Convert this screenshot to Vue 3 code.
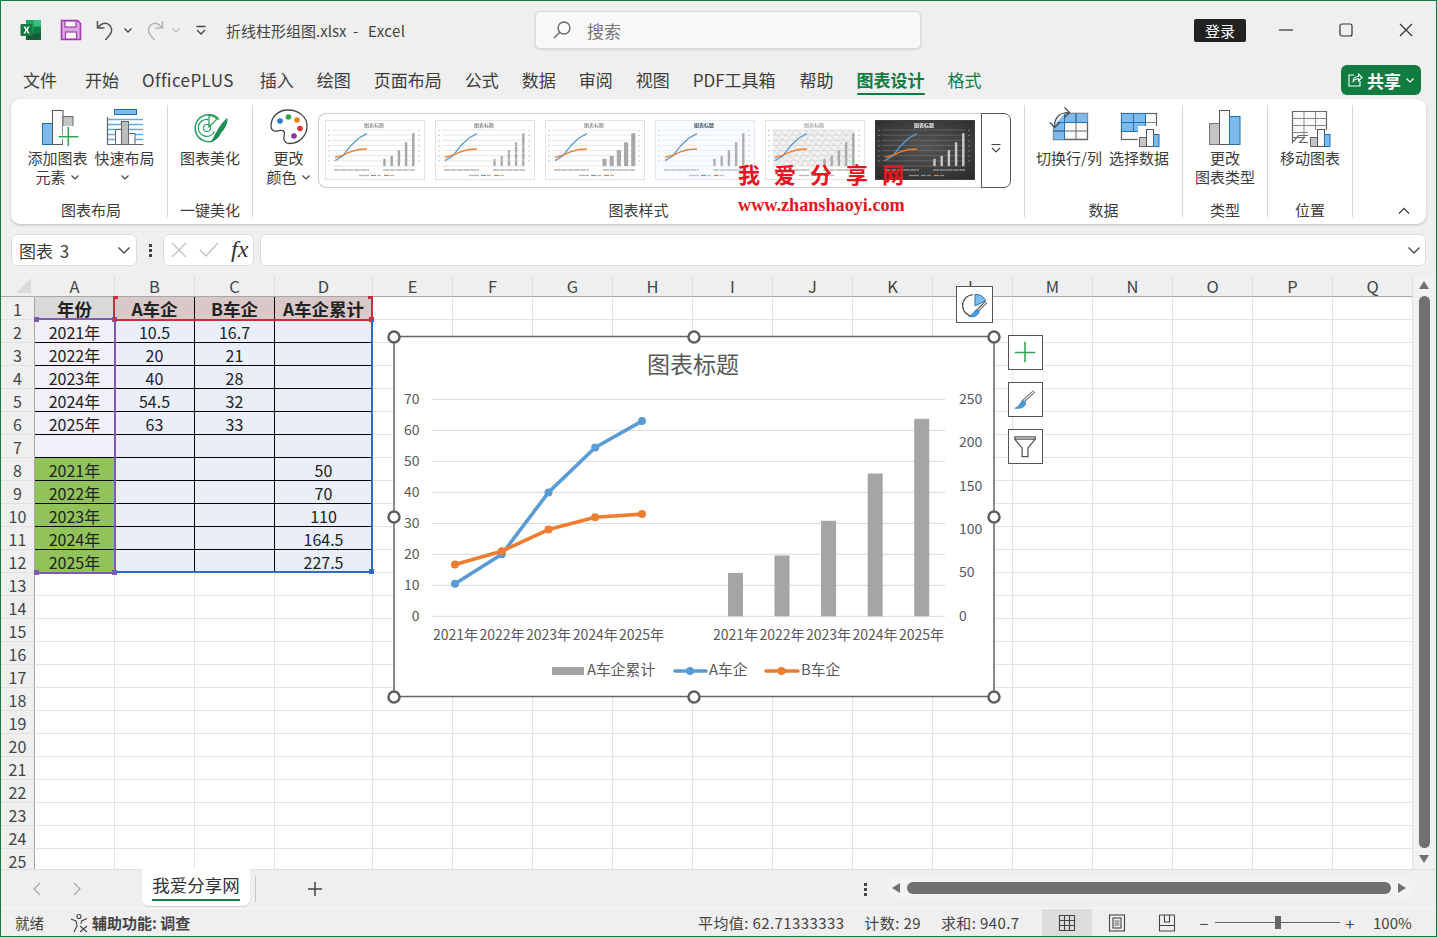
<script setup>
const letters = ['A','B','C','D','E','F','G','H','I','J','K','L','M','N','O','P','Q']
const rowsCount = Array.from({ length: 25 }, (_, i) => i + 1)

const years = ['2021年','2022年','2023年','2024年','2025年']
const values = {
  '1-0': '年份', '1-1': 'A车企', '1-2': 'B车企', '1-3': 'A车企累计',
  '2-1': '10.5', '2-2': '16.7', '3-1': '20', '3-2': '21', '4-1': '40', '4-2': '28',
  '5-1': '54.5', '5-2': '32', '6-1': '63', '6-2': '33',
  '8-3': '50', '9-3': '70', '10-3': '110', '11-3': '164.5', '12-3': '227.5'
}
years.forEach((y, i) => { values[`${i + 2}-0`] = y; values[`${i + 8}-0`] = y })

function cellClass(r, c) {
  if (r > 12 || c > 3) return ''
  if (r === 1) return c === 0 ? 'tbl h-a' : 'tbl h-b'
  if (c === 0) return r >= 8 ? 'tbl y-green' : 'tbl y-pale'
  return 'tbl body'
}

const A = [10.5, 20, 40, 54.5, 63]
const B = [16.7, 21, 28, 32, 33]
const D = [50, 70, 110, 164.5, 227.5]

const baseY = 616.3
const unit = 3.098
const lineX = [455, 501.8, 548.5, 595.2, 642]
const pts = (arr) => arr.map((v, i) => [lineX[i], +(baseY - v * unit).toFixed(1)])
const aPts = pts(A)
const bPts = pts(B)
const toLine = (p) => p.map((q) => q.join(',')).join(' ')
const gridY = [0, 1, 2, 3, 4, 5, 6, 7].map((i) => +(baseY - i * 10 * unit).toFixed(1))
const leftTicks = [0, 10, 20, 30, 40, 50, 60, 70]
const rightTicks = [0, 50, 100, 150, 200, 250]
const barX = [735.5, 782, 828.6, 875.2, 921.7]
const bars = D.map((v, i) => ({ x: barX[i] - 7.5, y: +(baseY - v * (217 / 250)).toFixed(1), h: +(v * (217 / 250)).toFixed(1) }))
const xLabelsL = [455.5, 502, 548.5, 595.3, 641.5]
const xLabelsR = [735.5, 782, 828.5, 875, 921.5]
const handles = [[394, 337], [694, 337], [994, 337], [394, 517], [994, 517], [394, 697], [694, 697], [994, 697]]

const tX = [10, 18, 26, 34, 42]
const tY = (v) => +(46 - v * 36 / 70).toFixed(1)
const tAP = A.map((v, i) => [tX[i], tY(v)])
const tBP = B.map((v, i) => [tX[i], tY(v)])
const tA = toLine(tAP)
const tB = toLine(tBP)
const tGrid = [0, 1, 2, 3, 4, 5, 6, 7].map((i) => +(46 - i * 36 / 7).toFixed(1))
const thumbs = [
  { id: 1, bw: 2.4, barFill: '#a5a5a5', grid: '#d4d4d4', title: '#666666', bg: '#ffffff', stroke: '#e2e2e2', tick: '#b5b5b5' },
  { id: 2, bw: 2.4, barFill: '#ababab', grid: '#d4d4d4', title: '#555555', bg: '#ffffff', stroke: '#e2e2e2', tick: '#b5b5b5', dotted: true },
  { id: 3, bw: 4.2, barFill: '#a9a9a9', grid: '#d8d8d8', title: '#666666', bg: '#ffffff', stroke: '#e2e2e2', tick: '#b5b5b5' },
  { id: 4, bw: 2.4, barFill: '#adadad', grid: '#d8e2f3', title: '#44546a', bg: '#fbfcff', stroke: '#e2e8f3', tick: '#b8c4da', bold: true },
  { id: 5, bw: 2.4, barFill: '#a9a9a9', grid: '#cccccc', title: '#888888', bg: '#ffffff', stroke: '#e2e2e2', tick: '#b5b5b5', hatch: true },
  { id: 6, bw: 2.4, barFill: '#c9c9c9', grid: '#777777', title: '#eeeeee', bg: 'url(#darkBg)', stroke: '#3f3f3f', tick: '#8a8a8a', bold: true }
]
const tBars = (t) => D.map((v, i) => ({ x: 59.5 + i * 7.2 - t.bw / 2, y: +(46 - v * 36 / 250).toFixed(1), h: +(v * 36 / 250).toFixed(1) }))
</script>

<template>
  <div class="app">
    <header class="titlebar">
      <svg class="ic-excel" viewBox="0 0 22 22" width="22" height="22">
        <rect x="6" y="1" width="15" height="20" rx="2" fill="#21a366"/>
        <rect x="13.5" y="1" width="7.5" height="6.7" fill="#33c481"/>
        <rect x="6" y="1" width="7.5" height="6.7" fill="#21a366"/>
        <rect x="13.5" y="7.7" width="7.5" height="6.6" fill="#107c41"/>
        <rect x="6" y="14.3" width="15" height="6.7" fill="#185c37"/>
        <rect x="0.5" y="5" width="12" height="12" rx="1.2" fill="#107c41"/>
        <path d="M3.5 7.6h1.9l1.2 2.3 1.2-2.3h1.800l-2 3.300 2.100 3.500H7.800l-1.300-2.400-1.300 2.400H3.400l2.100-3.500z" fill="#fff"/>
      </svg>
      <svg class="ic-save" viewBox="0 0 22 22" width="22" height="22">
        <path d="M1.500 1.500h16l3 3v16h-19z" fill="#d9a7e0" stroke="#a43bb0" stroke-width="1.600"/>
        <rect x="5" y="2" width="11" height="6" fill="#fff" stroke="#a43bb0" stroke-width="1.200"/>
        <rect x="5.500" y="13" width="11" height="7" fill="#fff" stroke="#a43bb0" stroke-width="1.200"/>
      </svg>
      <svg class="ic-undo" viewBox="0 0 20 22" width="20" height="22">
        <path d="M1.500 2v7h7M2 8.500c4-4.600 8-5 11-2.800 3.400 2.600 3.600 7 .4 10.500L9.500 21" fill="none" stroke="#555" stroke-width="1.500"/>
      </svg>
      <svg class="chev ic-ch1" viewBox="0 0 10 10" width="10" height="10"><path d="M1.500 3.500 5 7l3.500-3.500" fill="none" stroke="#444" stroke-width="1.300"/></svg>
      <svg class="ic-redo" viewBox="0 0 20 22" width="20" height="22">
        <path d="M18.500 2v7h-7M18 8.500c-4-4.600-8-5-11-2.800C3.600 8.300 3.400 12.700 6.600 16.200L10.500 21" fill="none" stroke="#b4b4b4" stroke-width="1.500"/>
      </svg>
      <svg class="chev ic-ch2" viewBox="0 0 10 10" width="10" height="10"><path d="M1.500 3.500 5 7l3.500-3.500" fill="none" stroke="#bbb" stroke-width="1.300"/></svg>
      <svg class="ic-custom" viewBox="0 0 12 12" width="12" height="12"><path d="M1.500 2.500h9M2 6l4 4 4-4" fill="none" stroke="#444" stroke-width="1.300"/></svg>
      <div class="doc-title">折线柱形组图.xlsx&nbsp;&nbsp;-&nbsp;&nbsp;<span class="dt-app">Excel</span></div>
      <div class="search">
        <svg viewBox="0 0 20 20" width="20" height="20"><circle cx="12" cy="8" r="6" fill="none" stroke="#666" stroke-width="1.300"/><path d="M7.500 12.500 2 18" stroke="#666" stroke-width="1.400"/></svg>
        <span>搜索</span>
      </div>
      <div class="login">登录</div>
      <div class="win-ctl">
        <svg viewBox="0 0 14 14" width="14" height="14"><path d="M0 7h14" stroke="#333" stroke-width="1.200"/></svg>
      </div>
      <div class="win-ctl">
        <svg viewBox="0 0 14 14" width="14" height="14"><rect x="1" y="1" width="12" height="12" rx="2" fill="none" stroke="#333" stroke-width="1.200"/></svg>
      </div>
      <div class="win-ctl">
        <svg viewBox="0 0 14 14" width="14" height="14"><path d="M1 1l12 12M13 1 1 13" stroke="#333" stroke-width="1.200"/></svg>
      </div>
    </header>

    <nav class="tabs">
      <span class="tab">文件</span>
      <span class="tab t-kaishi">开始</span>
      <span class="tab t-plus">OfficePLUS</span>
      <span class="tab t-insert">插入</span>
      <span class="tab">绘图</span>
      <span class="tab">页面布局</span>
      <span class="tab">公式</span>
      <span class="tab">数据</span>
      <span class="tab">审阅</span>
      <span class="tab">视图</span>
      <span class="tab">PDF工具箱</span>
      <span class="tab t-help">帮助</span>
      <span class="tab active">图表设计</span>
      <span class="tab green">格式</span>
      <button class="share">
        <svg viewBox="0 0 16 16" width="16" height="16"><path d="M7 3H2v11h11V9M6 10c0-3.500 2-5.500 5.500-5.500V2L15 5.500 11.500 9V6.800C9 6.800 7 8 6 10z" fill="none" stroke="#fff" stroke-width="1.100"/></svg>
        <b>共享</b>
        <svg viewBox="0 0 10 10" width="10" height="10"><path d="M1.500 3.500 5 7l3.500-3.500" fill="none" stroke="#fff" stroke-width="1.200"/></svg>
      </button>
    </nav>

    <section class="ribbon">
      <div class="group g1">
        <div class="gbody">
          <div class="rbtn">
            <svg class="ric" viewBox="0 0 40 40" width="40" height="40">
              <rect x="4.500" y="15.500" width="10" height="21" fill="#7fbaec" stroke="#1f72b8"/>
              <rect x="14.500" y="2.500" width="10.500" height="34" fill="#fafafa" stroke="#555"/>
              <rect x="25" y="8.500" width="10" height="28" fill="#c4c4c4" stroke="#6a6a6a"/>
              <rect x="25" y="18" width="12" height="20" fill="#fff"/>
              <path d="M30.300 19v19M20.500 28.700h20" stroke="#fff" stroke-width="4"/>
              <path d="M30.300 19v19M20.500 28.700h20" stroke="#33a457" stroke-width="1.600"/>
            </svg>
            <span>添加图表</span>
            <span>元素<svg class="mchev" viewBox="0 0 10 10" width="10" height="10"><path d="M1.500 3.500 5 7l3.500-3.500" fill="none" stroke="#444" stroke-width="1.200"/></svg></span>
          </div>
          <div class="rbtn">
            <svg class="ric" viewBox="0 0 40 40" width="40" height="40">
              <rect x="9.500" y="1.500" width="22" height="5" fill="#7fbaec" stroke="#1f72b8"/>
              <path d="M2 11.500h36M2 16.500h36M2 21.500h36M2 26.500h36M2 31.500h36" stroke="#64abe6" stroke-width="1.300"/>
              <path d="M2.500 9v27.500h36" fill="none" stroke="#666" stroke-width="1.200"/>
              <rect x="10.500" y="21.500" width="6" height="15" fill="#fafafa" stroke="#666"/>
              <rect x="16.500" y="13.500" width="7" height="23" fill="#bdbdbd" stroke="#666"/>
              <rect x="23.500" y="25.500" width="6.500" height="11" fill="#fafafa" stroke="#666"/>
            </svg>
            <span>快速布局</span>
            <span><svg viewBox="0 0 10 10" width="10" height="10"><path d="M1.500 3.500 5 7l3.500-3.500" fill="none" stroke="#444" stroke-width="1.200"/></svg></span>
          </div>
        </div>
        <div class="glabel shift">图表布局</div>
      </div>

      <div class="group g2">
        <div class="gbody center">
          <div class="rbtn">
            <svg class="ric" viewBox="0 0 40 40" width="40" height="40">
              <path d="M29 11.500A13.500 13.500 0 1 0 23 33" fill="none" stroke="#2e9e62" stroke-width="1.500"/>
              <path d="M19 7.500a11 11 0 0 1 8 3.500l-8 8z" fill="none" stroke="#2e9e62" stroke-width="1.300"/>
              <path d="M18 11.500a8.500 8.500 0 1 0 6.500 12" fill="none" stroke="#2e9e62" stroke-width="1.300"/>
              <circle cx="17" cy="20" r="3.500" fill="none" stroke="#2e9e62" stroke-width="1.200"/>
              <path d="M37.500 10C38 16 34 22 31 25c-2 5-6 8-10 9 2-4 4-8 6-11 2-4 6-10 10.500-13z" fill="#1f8f55"/>
            </svg>
            <span>图表美化</span>
          </div>
        </div>
        <div class="glabel">一键美化</div>
      </div>

      <div class="group g3">
        <div class="gbody">
          <div class="rbtn color-btn">
            <svg class="ric" viewBox="0 0 40 40" width="40" height="40">
              <path d="M19 2C8 2 2 10 2 18c0 4 2.500 5.500 5.500 5 3-.6 6-1.500 7.500.5 1.600 2.200-.5 4.200-.2 7 .3 3 2.700 5 6.200 5C30 35.500 38 28 38 18 38 9 30 2 19 2z" fill="#fff" stroke="#444" stroke-width="1.300"/>
              <circle cx="11" cy="13" r="2.800" fill="#2a7cc7"/>
              <circle cx="19.500" cy="9" r="2.800" fill="#33a457"/>
              <circle cx="28" cy="12" r="2.800" fill="#e8821c"/>
              <circle cx="31" cy="20.500" r="2.800" fill="#e0303a"/>
              <circle cx="25" cy="28" r="2.800" fill="#8a33a8"/>
            </svg>
            <span>更改</span>
            <span>颜色<svg class="mchev" viewBox="0 0 10 10" width="10" height="10"><path d="M1.500 3.500 5 7l3.500-3.500" fill="none" stroke="#444" stroke-width="1.200"/></svg></span>
          </div>
          <div class="gallery">
            <svg v-for="t in thumbs" :key="t.id" class="thumb" viewBox="0 0 100 60" width="100" height="60">
              <defs v-if="t.hatch">
                <pattern id="hatchP" width="5" height="5" patternUnits="userSpaceOnUse" patternTransform="rotate(35)">
                  <rect width="5" height="5" fill="#f4f4f4"/>
                  <path d="M0 0h5M0 0v5" stroke="#c8c8c8" stroke-width="0.800"/>
                </pattern>
              </defs>
              <defs v-if="t.id === 6">
                <radialGradient id="darkBg" cx="50%" cy="45%" r="70%">
                  <stop offset="0" stop-color="#555"/>
                  <stop offset="1" stop-color="#2c2c2c"/>
                </radialGradient>
              </defs>
              <rect x="0.500" y="0.500" width="99" height="59" :fill="t.bg" :stroke="t.stroke"/>
              <rect v-if="t.hatch" x="8" y="10" width="82" height="36" fill="url(#hatchP)"/>
              <text x="49" y="7" class="thumb-title" :fill="t.title" :font-weight="t.bold ? 700 : 400">图表标题</text>
              <line v-for="y in tGrid" :key="y" x1="7" x2="90" :y1="y" :y2="y" :stroke="t.grid" stroke-width="0.600"/>
              <rect v-for="(b, i) in tBars(t)" :key="i" :x="b.x" :y="b.y" :width="t.bw" :height="b.h" :fill="t.barFill"/>
              <line v-if="t.dotted" x1="55" x2="92" y1="40" y2="40" stroke="#fff" stroke-width=".5"/>
              <line v-if="t.dotted" x1="55" x2="92" y1="33" y2="33" stroke="#fff" stroke-width=".5"/>
              <line v-if="t.dotted" x1="55" x2="92" y1="26" y2="26" stroke="#fff" stroke-width=".5"/>
              <polyline :points="tA" fill="none" stroke="#5b9bd5" stroke-width="1.300"/>
              <polyline :points="tB" fill="none" stroke="#ed7d31" stroke-width="1.300"/>
              <path d="M4 10v36M94 10v36" :stroke="t.tick" stroke-width="1.500" stroke-dasharray="1 4.100"/>
              <path d="M9 50h35M58 50h32" :stroke="t.tick" stroke-width="1.400" stroke-dasharray="6 .6"/>
              <path d="M34 55.500h10" :stroke="t.tick" stroke-width="1.300"/>
              <path d="M46 55.500h5" stroke="#5b9bd5" stroke-width="1.200"/>
              <path d="M52 55.500h4" :stroke="t.tick" stroke-width="1.300"/>
              <path d="M59 55.500h5" stroke="#ed7d31" stroke-width="1.200"/>
              <path d="M65 55.500h4" :stroke="t.tick" stroke-width="1.300"/>
            </svg>
          </div>
          <div class="gmore">
            <svg viewBox="0 0 12 12" width="12" height="12"><path d="M1.500 2.500h9M2 6l4 4 4-4" fill="none" stroke="#444" stroke-width="1.200"/></svg>
          </div>
        </div>
        <div class="glabel">图表样式</div>
      </div>

      <div class="group g4">
        <div class="gbody">
          <div class="rbtn w70">
            <svg class="ric" viewBox="0 0 40 40" width="40" height="40">
              <path d="M4.500 5.500h34v26h-34z" fill="#fafafa" stroke="#666" stroke-width="1.300"/>
              <path d="M4.500 5.500h34v9h-34zM4.500 14.500h11v17h-11z" fill="#7fbaec"/>
              <path d="M15.500 5.500v26M27 5.500v26M4.500 14.500h34M4.500 23h34" stroke="#666" stroke-width="1"/>
              <path d="M4.500 14.500h34M15.500 5.500v26M27 5.500v9M4.500 23h11" fill="none" stroke="#1f72b8" stroke-width="1"/>
              <path d="M0 4h17L3 20H0z" fill="#fff"/>
              <path d="M5.500 19C5.500 9 11 4.500 19.500 4.500" fill="none" stroke="#444" stroke-width="1.200"/>
              <path d="M15.500 -.5l5 5-5 5M.8 14.500l5 5 5-5" fill="none" stroke="#444" stroke-width="1.200"/>
            </svg>
            <span>切换行/列</span>
          </div>
          <div class="rbtn w70">
            <svg class="ric" viewBox="0 0 40 40" width="40" height="40">
              <rect x="2.500" y="5.500" width="35" height="26" fill="#fafafa" stroke="#666" stroke-width="1.200"/>
              <path d="M26.500 5.500v26M2.500 23.500h35M2.500 14.500h35" stroke="#888"/>
              <rect x="2.500" y="5.500" width="24" height="18" fill="#7fbaec" stroke="#1f72b8"/>
              <path d="M2.500 14.500h24M14.500 5.500v18" stroke="#1f72b8"/>
              <rect x="19" y="18" width="23" height="24" fill="#fff"/>
              <rect x="20.500" y="29.500" width="7" height="9" fill="#c4c4c4" stroke="#666"/>
              <rect x="27.500" y="21.500" width="7" height="17" fill="#fafafa" stroke="#555"/>
              <rect x="34.500" y="26.500" width="5.500" height="12" fill="#7fbaec" stroke="#1f72b8"/>
            </svg>
            <span>选择数据</span>
          </div>
        </div>
        <div class="glabel">数据</div>
      </div>

      <div class="group g5">
        <div class="gbody center">
          <div class="rbtn">
            <svg class="ric" viewBox="0 0 40 40" width="40" height="40">
              <rect x="4.500" y="15.500" width="10" height="21" fill="#c4c4c4" stroke="#777"/>
              <rect x="14.500" y="2.500" width="10" height="34" fill="#fafafa" stroke="#555"/>
              <rect x="24.500" y="8.500" width="10.500" height="28" fill="#7fbaec" stroke="#1f72b8"/>
            </svg>
            <span>更改</span>
            <span>图表类型</span>
          </div>
        </div>
        <div class="glabel">类型</div>
      </div>

      <div class="group g6">
        <div class="gbody center">
          <div class="rbtn">
            <svg class="ric" viewBox="0 0 40 40" width="40" height="40">
              <path d="M2.500 3.500h34v24h-28l-6 7z" fill="#fafafa" stroke="#666" stroke-width="1.200"/>
              <path d="M2.500 10.500h34M2.500 17.500h34M2.500 24.500h30M14 3.500v26M25.500 3.500v22" stroke="#888" stroke-width="1"/>
              <path d="M2.500 29.500h12l-5 5H20" fill="none" stroke="#666" stroke-width="1.100"/>
              <rect x="18" y="22" width="24" height="20" fill="#fff"/>
              <rect x="20.500" y="29.500" width="7" height="9" fill="#c4c4c4" stroke="#666"/>
              <rect x="27.500" y="21.500" width="7" height="17" fill="#fafafa" stroke="#555"/>
              <rect x="34.500" y="26.500" width="5.500" height="12" fill="#7fbaec" stroke="#1f72b8"/>
            </svg>
            <span>移动图表</span>
          </div>
        </div>
        <div class="glabel">位置</div>
      </div>

      <svg class="collapse" viewBox="0 0 14 14" width="14" height="14"><path d="M2 9.500 7 4.500l5 5" fill="none" stroke="#444" stroke-width="1.300"/></svg>

      <div class="watermark">
        <div class="wm-cn">我爱分享网</div>
        <div class="wm-url">www.zhanshaoyi.com</div>
      </div>
    </section>

    <div class="formula">
      <div class="namebox">
        <span class="nm">图表 3</span>
        <svg viewBox="0 0 14 14" width="14" height="14"><path d="M1.500 4.500 7 10l5.500-5.500" fill="none" stroke="#444" stroke-width="1.300"/></svg>
      </div>
      <div class="dots"><i></i><i></i><i></i></div>
      <div class="fx-box">
        <svg viewBox="0 0 16 16" width="16" height="16"><path d="M1 1l14 14M15 1 1 15" stroke="#c4c4c4" stroke-width="1.400"/></svg>
        <svg viewBox="0 0 20 16" width="20" height="16"><path d="M1 8l6 6L19 1" fill="none" stroke="#c4c4c4" stroke-width="1.400"/></svg>
        <span class="fx">fx</span>
      </div>
      <div class="finput">
        <svg viewBox="0 0 14 14" width="14" height="14"><path d="M1.500 4.500 7 10l5.500-5.500" fill="none" stroke="#444" stroke-width="1.300"/></svg>
      </div>
    </div>

    <main class="sheet">
      <div class="grid">
        <div class="corner"><i></i></div>
        <div v-for="l in letters" :key="l" class="colh">{{ l }}</div>
        <template v-for="r in rowsCount" :key="r">
          <div class="rowh">{{ r }}</div>
          <div v-for="(l, c) in letters" :key="l" class="cell" :class="cellClass(r, c)">{{ values[r + '-' + c] }}</div>
        </template>

        <div class="frame f-purple"><i class="hd tl"></i><i class="hd tr"></i><i class="hd bl"></i><i class="hd br"></i></div>
        <div class="frame f-red"><i class="hd tl"></i><i class="hd tr"></i><i class="hd br"></i></div>
        <div class="frame f-blue"><i class="hd br"></i></div>

        <svg class="chart" viewBox="385 327 620 380" width="620" height="380">
          <rect x="394" y="336.500" width="600" height="360" fill="#fff" stroke="#666" stroke-width="1.500"/>
          <text x="693" y="372.500" class="c-title">图表标题</text>
          <line v-for="y in gridY" :key="y" x1="432" x2="945" :y1="y" :y2="y" class="c-grid"/>
          <text v-for="(t, i) in leftTicks" :key="t" x="419.500" :y="gridY[i] + 4.500" class="c-tick end">{{ t }}</text>
          <text v-for="(t, i) in rightTicks" :key="t" x="959" :y="616.300 - i * 43.400 + 4.500" class="c-tick">{{ t }}</text>
          <rect v-for="(b, i) in bars" :key="i" :x="b.x" :y="b.y" width="15" :height="b.h" fill="#a5a5a5"/>
          <polyline :points="toLine(aPts)" class="c-line blue"/>
          <polyline :points="toLine(bPts)" class="c-line orange"/>
          <circle v-for="(p, i) in aPts" :key="i" :cx="p[0]" :cy="p[1]" r="4" fill="#5b9bd5"/>
          <circle v-for="(p, i) in bPts" :key="i" :cx="p[0]" :cy="p[1]" r="4" fill="#ed7d31"/>
          <text v-for="(x, i) in xLabelsL" :key="i" :x="x" y="640" class="c-xl">{{ ['2021年','2022年','2023年','2024年','2025年'][i] }}</text>
          <text v-for="(x, i) in xLabelsR" :key="i" :x="x" y="640" class="c-xl">{{ ['2021年','2022年','2023年','2024年','2025年'][i] }}</text>
          <rect x="552" y="667" width="32" height="8" fill="#a5a5a5"/>
          <text x="587" y="675" class="c-leg">A车企累计</text>
          <line x1="675" x2="706" y1="671" y2="671" class="c-line blue"/>
          <circle cx="690" cy="671" r="4" fill="#5b9bd5"/>
          <text x="709" y="675" class="c-leg">A车企</text>
          <line x1="766" x2="798" y1="671" y2="671" class="c-line orange"/>
          <circle cx="781.500" cy="671" r="4" fill="#ed7d31"/>
          <text x="801" y="675" class="c-leg">B车企</text>
          <circle v-for="(h, i) in handles" :key="i" :cx="h[0]" :cy="h[1]" r="5.500" fill="#fff" stroke="#5f5f5f" stroke-width="2.500"/>
        </svg>

        <div class="tool pie">
          <svg viewBox="0 0 36 36" width="36" height="36">
            <path d="M16.500 7.500A11 11 0 1 0 17 29.500" fill="none" stroke="#444" stroke-width="1.200"/>
            <path d="M18.500 7a12 12 0 0 1 11 6.500l-11 5.500z" fill="#7fbaec" stroke="#1f72b8"/>
            <path d="M30 15 20 25" stroke="#444" stroke-width="3"/>
            <path d="M30 15 20 25" stroke="#fff" stroke-width="1.200"/>
            <path d="M12 29.500c4 1.500 8 .5 10-2.500 1.500-2.200.5-4-1.500-4-3.500 0-2.500 4.500-8.500 6.500z" fill="#4a9be0" stroke="#1f72b8" stroke-width=".600"/>
          </svg>
        </div>
        <div class="tools">
          <div class="tool">
            <svg viewBox="0 0 34 34" width="34" height="34"><path d="M16.500 5.500v21M6 16.500h21" stroke="#33a457" stroke-width="1.600"/></svg>
          </div>
          <div class="tool">
            <svg viewBox="0 0 34 34" width="34" height="34">
              <path d="M26 8 14 19" stroke="#555" stroke-width="3"/>
              <path d="M26 8 14 19" stroke="#fff" stroke-width="1.200"/>
              <path d="M6 25.500c3 .3 8 .5 10.500-3 1.500-2.200.5-4.500-2-4.500-3.500.2-2.500 5.500-8.500 7.500z" fill="#4a9be0" stroke="#1f72b8" stroke-width=".600"/>
            </svg>
          </div>
          <div class="tool">
            <svg viewBox="0 0 34 34" width="34" height="34"><path d="M6 6.500h21v2.500l-7.500 9v9h-6v-9L6 9zM6 9h21" fill="none" stroke="#555" stroke-width="1.300"/></svg>
          </div>
        </div>
      </div>

      <aside class="vscroll">
        <i class="arr up"></i>
        <div class="vthumb"></div>
        <i class="arr down"></i>
      </aside>
    </main>

    <div class="sheetbar">
      <svg class="nav-l" viewBox="0 0 10 14" width="10" height="14"><path d="M8 1 2 7l6 6" fill="none" stroke="#aaa" stroke-width="1.300"/></svg>
      <svg class="nav-r" viewBox="0 0 10 14" width="10" height="14"><path d="M2 1l6 6-6 6" fill="none" stroke="#aaa" stroke-width="1.300"/></svg>
      <div class="stab"><span>我爱分享网</span></div>
      <i class="sep"></i>
      <svg class="plus" viewBox="0 0 14 14" width="14" height="14"><path d="M7 0v14M0 7h14" stroke="#444" stroke-width="1.500"/></svg>
      <div class="dots small"><i></i><i></i><i></i></div>
      <div class="hscroll">
        <i class="harr l"></i>
        <div class="hthumb"></div>
        <i class="harr r"></i>
      </div>
    </div>

    <footer class="status">
      <span class="ready">就绪</span>
      <svg class="acc" viewBox="0 0 20 20" width="20" height="20">
        <circle cx="10" cy="3.500" r="2" fill="none" stroke="#444" stroke-width="1.100"/>
        <path d="M2 6l5 2 1 5-3 6M18 5.500 12.500 8l-.5 3" fill="none" stroke="#444" stroke-width="1.100"/>
        <path d="M11 13l7 6M18 13l-7 6" stroke="#444" stroke-width="1.100"/>
      </svg>
      <b class="a11y">辅助功能: 调查</b>
      <div class="stats">
        <span>平均值: 62.71333333</span>
        <span>计数: 29</span>
        <span>求和: 940.7</span>
      </div>
      <div class="view active">
        <svg viewBox="0 0 18 18" width="18" height="18"><path d="M1.500 1.500h15v15h-15zM6.500 1.500v15M11.500 1.500v15M1.500 6.500h15M1.500 11.500h15" fill="none" stroke="#444" stroke-width="1.100"/></svg>
      </div>
      <div class="view">
        <svg viewBox="0 0 18 18" width="18" height="18"><rect x="1.500" y="1" width="15" height="16" fill="none" stroke="#444" stroke-width="1.100"/><rect x="5" y="4" width="8" height="10" fill="none" stroke="#444" stroke-width="1.100"/><path d="M6.500 7h5M6.500 9h5M6.500 11h5" stroke="#444" stroke-width=".800"/></svg>
      </div>
      <div class="view">
        <svg viewBox="0 0 18 18" width="18" height="18"><path d="M1.500 1v16h15V1M1.500 11.500h15M6.500 1v7h5V1M1.500 1h15" fill="none" stroke="#444" stroke-width="1.100"/></svg>
      </div>
      <div class="zoomer">
        <span class="z-sign">−</span>
        <div class="z-track"><i></i></div>
        <span class="z-sign">+</span>
        <span class="z-val">100%</span>
      </div>
    </footer>
  </div>
</template>

<style scoped>
.app {
  width: 1437px;
  height: 937px;
  box-sizing: border-box;
  border: 1px solid #107c41;
  background: #efefef;
  display: flex;
  flex-direction: column;
  overflow: hidden;
  font-family: "Noto Sans CJK SC", "Noto Sans", sans-serif;
  color: #3c3c3c;
}

/* title bar */
.titlebar { height: 59px; flex: none; display: flex; align-items: center; box-sizing: border-box; padding-bottom: 1px; }
.titlebar > svg { flex: none; }
.ic-excel { margin-left: 19px; }
.ic-save { margin-left: 18px; }
.ic-undo { margin-left: 14px; }
.ic-ch1 { margin-left: 7px; }
.ic-redo { margin-left: 11px; }
.ic-ch2 { margin-left: 7px; }
.ic-custom { margin-left: 14px; }
.doc-title { margin-left: 19px; width: 309px; flex: none; font-size: 15px; white-space: nowrap; color: #444; }
.dt-app { margin-left: 3px; letter-spacing: .4px; }
.search {
  width: 386px; height: 38px; flex: none; box-sizing: border-box;
  background: #f9f9f9; border: 1px solid #d9d9d9; border-radius: 5px;
  box-shadow: 0 1px 2px rgba(0,0,0,.12);
  display: flex; align-items: center; padding-left: 16px; gap: 15px;
  font-size: 17px; color: #777;
}
.login {
  margin-left: 273px; width: 52px; height: 23px; flex: none;
  background: #222; color: #fff; border-radius: 2px; font-size: 15px;
  display: flex; align-items: center; justify-content: center;
}
.win-ctl { width: 60px; flex: none; display: flex; justify-content: center; }
.win-ctl:nth-last-child(3) { margin-left: 10px; }

/* tabs */
.tabs { height: 39px; flex: none; display: flex; align-items: center; gap: 23px; padding-left: 22px; font-size: 17px; color: #3c3c3c; position: relative; }
.tab { position: relative; white-space: nowrap; }
.t-kaishi { margin-left: 5px; }
.t-plus { letter-spacing: .4px; }
.t-insert { margin-left: 3px; }
.t-help { margin-left: 1px; }
.tab.active { color: #107c41; font-weight: 700; }
.tab.active::after { content: ""; position: absolute; left: 0; right: 0; bottom: -3px; height: 2.500px; background: #107c41; border-radius: 1px; }
.tab.green { color: #107c41; }
.share {
  position: absolute; left: 1340px; top: 5px; width: 80px; height: 30px;
  background: #107c41; border: 0; border-radius: 6px; color: #fff;
  display: flex; align-items: center; justify-content: center; gap: 4px;
  font-family: inherit; font-size: 17px; padding: 0;
}
.share b { font-weight: 700; }

/* ribbon */
.ribbon {
  height: 125px; flex: none; margin: 0 10px; box-sizing: border-box;
  background: #fff; border-radius: 9px; box-shadow: 0 1px 3px rgba(0,0,0,.22);
  display: flex; padding: 6px 0 7px; position: relative; font-size: 15px; color: #3c3c3c;
}
.group { flex: none; box-sizing: border-box; display: flex; flex-direction: column; border-right: 1px solid #d6d6d6; }
.g1 { width: 157px; }
.g2 { width: 85px; }
.g3 { width: 772px; }
.g4 { width: 158px; }
.g5 { width: 85px; }
.g6 { width: 85px; }
.gbody { flex: 1; display: flex; padding-top: 3px; align-items: flex-start; }
.g1 .gbody { padding-left: 13px; }
.g3 .gbody { padding-left: 6px; }
.g4 .gbody { padding-left: 9px; }
.gbody.center { justify-content: center; }
.glabel { height: 16px; line-height: 18px; text-align: center; }
.glabel.shift { padding-left: 4px; }
.rbtn { width: 67px; flex: none; display: flex; flex-direction: column; align-items: center; line-height: 19px; white-space: nowrap; }
.rbtn span { height: 19px; display: flex; align-items: center; }
.g5 .rbtn, .g6 .rbtn, .g2 .rbtn { width: auto; }
.color-btn { width: 59px; }
.w70 { width: 70px; }
.ric { display: block; overflow: visible; margin-bottom: 0; }
.mchev { margin-left: 4px; }
.gallery {
  box-sizing: border-box; width: 663px; height: 75px; margin-top: 5px; padding: 6px;
  border: 1px solid #cccccc; border-right: 0; border-radius: 8px 0 0 8px;
  display: flex; gap: 10px; flex: none;
}
.thumb { display: block; flex: none; filter: blur(.3px); }
.thumb-title { font-size: 5px; text-anchor: middle; }
.gmore {
  box-sizing: border-box; width: 30px; height: 75px; margin-top: 5px; flex: none;
  border: 1px solid #555; border-radius: 0 7px 7px 0;
  display: flex; align-items: center; justify-content: center; padding-bottom: 5px; padding-right: 1px;
}
.collapse { position: absolute; right: 15px; top: 105px; }
.watermark { position: absolute; left: 727px; top: 59px; width: 170px; color: #e8141c; }
.wm-cn { font-size: 22px; font-weight: 700; letter-spacing: 14px; line-height: 30px; white-space: nowrap; }
.wm-url { font-family: "Liberation Serif", serif; font-weight: 700; font-size: 18.200px; line-height: 20px; margin-top: 7px; white-space: nowrap; }

/* formula */
.formula { height: 32px; flex: none; margin: 10px 0; padding: 0 10px; display: flex; align-items: stretch; }
.namebox {
  width: 126px; flex: none; box-sizing: border-box; background: #fff;
  border: 1px solid #dcdcdc; border-radius: 6px; display: flex; align-items: center;
  justify-content: space-between; padding: 0 5px 0 7px; font-size: 17px;
}
.nm { word-spacing: 3px; }
.dots { width: 26px; flex: none; display: flex; flex-direction: column; align-items: center; justify-content: center; gap: 2px; }
.dots i { width: 3px; height: 3px; background: #444; display: block; }
.fx-box {
  width: 91px; flex: none; box-sizing: border-box; background: #fff;
  border: 1px solid #dcdcdc; border-radius: 6px; display: flex; align-items: center; padding-left: 7px; gap: 12px;
}
.fx { font-family: "Liberation Serif", serif; font-style: italic; font-weight: 400; font-size: 24px; color: #333; line-height: 1; margin-top: -2px; }
.finput {
  flex: 1; margin-left: 6px; box-sizing: border-box; background: #fff;
  border: 1px solid #dcdcdc; border-radius: 6px; display: flex; align-items: center; justify-content: flex-end; padding-right: 4px;
}

/* sheet */
.sheet { flex: 1; min-height: 0; display: flex; background: #fff; }
.grid {
  flex: none; position: relative; display: grid;
  grid-template-columns: 34px repeat(3, 80px) 98px repeat(13, 80px);
  grid-template-rows: 21px;
  grid-auto-rows: 23px;
}
.corner { background: #efefef; border-right: 1px solid #efefef; border-bottom: 1px solid #a8a8a8; position: relative; box-sizing: border-box; }
.corner i { position: absolute; left: 15px; top: 2px; width: 15px; height: 15px; background: #dcdcdc; clip-path: polygon(100% 0, 100% 100%, 0 100%); }
.colh {
  background: #efefef; box-sizing: border-box; border-right: 1px solid #dcdcdc; border-bottom: 1px solid #a8a8a8;
  font-size: 16.500px; line-height: 20px; text-align: center; color: #444;
}
.rowh {
  background: #efefef; box-sizing: border-box; border-right: 1px solid #a8a8a8; border-bottom: 1px solid #e0e0e0;
  font-size: 16px; line-height: 21px; padding-top: 2px; text-align: center; color: #444;
}
.cell {
  box-sizing: border-box; border-right: 1px solid #e3e3e3; border-bottom: 1px solid #e3e3e3;
  font-size: 16px; line-height: 21px; padding-top: 2px; text-align: center; color: #222; white-space: nowrap;
}
.tbl { border-right-color: #000; border-bottom-color: #000; }
.h-a { background: #d9d9d9; font-weight: 700; font-size: 17.500px; padding-top: 1px; }
.h-b { background: #d9c8c8; font-weight: 700; font-size: 17.500px; padding-top: 1px; }
.y-pale { background: #f2eff8; }
.y-green { background: #92c35a; }
.body { background: #e9eef8; }

.frame { position: absolute; box-sizing: border-box; }
.f-purple { left: 34px; top: 42px; width: 81px; height: 256px; border: 2px solid #7f5ab5; border-left: 0; }
.f-red { left: 112px; top: 21px; width: 260px; height: 24px; border: 2px solid #c4303e; border-top: 0; }
.f-blue { left: 115px; top: 44px; width: 257px; height: 253px; border: 2px solid #2f6bc3; border-top: 0; border-left: 0; }
.hd { position: absolute; width: 5px; height: 5px; display: block; }
.f-purple .hd { background: #7f5ab5; }
.f-red .hd { background: #c4303e; }
.f-blue .hd { background: #2f6bc3; }
.f-purple .tl { left: -1px; top: -3px; }
.f-purple .tr { right: -3px; top: -3px; }
.f-purple .bl { left: -1px; bottom: -3px; }
.f-purple .br { right: -3px; bottom: -3px; }
.f-red .tl { left: -2px; top: -1px; height: 3px; }
.f-red .tr { right: -2px; top: -1px; height: 3px; }
.f-red .br { right: -3px; bottom: -3px; }
.f-blue .br { right: -3px; bottom: -3px; }

.chart { position: absolute; left: 384px; top: 51px; overflow: visible; }
.c-title { font-size: 23px; fill: #595959; text-anchor: middle; }
.c-grid { stroke: #d9d9d9; stroke-width: 1; }
.c-tick { font-size: 14px; fill: #595959; }
.c-tick.end { text-anchor: end; }
.c-xl { font-size: 14px; fill: #595959; text-anchor: middle; }
.c-leg { font-size: 14.800px; fill: #595959; }
.c-line { fill: none; stroke-width: 3.600; stroke-linecap: round; stroke-linejoin: round; }
.c-line.blue { stroke: #5b9bd5; }
.c-line.orange { stroke: #ed7d31; }

.tool {
  width: 35px; height: 35px; box-sizing: border-box; background: #fff; border: 1px solid #555;
  display: flex; align-items: center; justify-content: center;
}
.tool.pie { position: absolute; left: 955px; top: 10px; width: 37px; height: 37px; }
.tools { position: absolute; left: 1007px; top: 59px; display: flex; flex-direction: column; gap: 12px; }

.vscroll { flex: 1; background: #f1f1f1; display: flex; flex-direction: column; align-items: center; padding: 5px 1px 0 0; }
.vthumb { width: 11px; height: 552px; background: #707070; border-radius: 6px; margin: 7px 0 7px; flex: none; }
.arr { width: 0; height: 0; border-left: 5px solid transparent; border-right: 5px solid transparent; display: block; flex: none; }
.arr.up { border-bottom: 8px solid #707070; }
.arr.down { border-top: 8px solid #707070; }

/* sheet bar */
.sheetbar { height: 39px; flex: none; position: relative; z-index: 2; background: #efefef; border-top: 1px solid #dfdfdf; box-sizing: border-box; display: flex; align-items: center; }
.nav-l { margin-left: 31px; }
.nav-r { margin-left: 30px; }
.stab {
  margin-left: 60px; width: 108px; height: 37px; margin-top: -1px; background: #fff; border-radius: 0 0 7px 7px;
  box-sizing: border-box; display: flex; justify-content: center; align-items: flex-start; align-self: flex-start; box-shadow: 0 1px 1px rgba(0,0,0,.12);
}
.stab span { font-size: 17.500px; line-height: 28px; height: 31px; padding-top: 1px; border-bottom: 2.500px solid #107c41; color: #333; box-sizing: border-box; white-space: nowrap; margin-top: 1px; }
.sep { width: 1px; height: 26px; background: #c8c8c8; margin-left: 5px; flex: none; display: block; }
.plus { margin-left: 52px; }
.dots.small { position: absolute; left: 851px; top: 9px; width: 26px; height: 20px; }
.hscroll {
  position: absolute; left: 885px; top: 7px; width: 530px; height: 21px; border-radius: 11px; background: #f3f3f3;
  display: flex; align-items: center; padding: 0 6px; box-sizing: border-box;
}
.hthumb { width: 484px; height: 12px; background: #707070; border-radius: 6px; margin: 0 7px; flex: none; }
.harr { width: 0; height: 0; border-top: 5px solid transparent; border-bottom: 5px solid transparent; display: block; flex: none; }
.harr.l { border-right: 8px solid #707070; }
.harr.r { border-left: 8px solid #707070; }

/* status */
.status { height: 28px; flex: none; position: relative; z-index: 2; background: #efefef; box-sizing: border-box; border-top: 1px solid #f8f8f8; display: flex; align-items: center; font-size: 14.500px; color: #444; }
.ready { margin-left: 14px; width: 30px; white-space: nowrap; }
.acc { margin-left: 24px; }
.a11y { margin-left: 3px; font-weight: 700; font-size: 15px; width: 606px; white-space: nowrap; color: #444; }
.stats { width: 344px; flex: none; display: flex; gap: 20px; white-space: nowrap; font-size: 15px; letter-spacing: .4px; }
.view { width: 50px; height: 100%; flex: none; display: flex; align-items: center; justify-content: center; }
.view.active { background: #dcdcdc; }
.zoomer { flex: 1; display: flex; align-items: center; padding-left: 6px; }
.z-sign { width: 12px; text-align: center; font-size: 16px; line-height: 16px; }
.z-track { width: 125px; height: 1px; background: #666; margin: 0 4px 0 5px; position: relative; }
.z-track i { position: absolute; left: 60px; top: -6px; width: 6px; height: 13px; background: #666; display: block; }
.z-val { margin-left: 17px; white-space: nowrap; font-size: 15px; }
</style>

<style>
html, body { margin: 0; background: #efefef; }
</style>
